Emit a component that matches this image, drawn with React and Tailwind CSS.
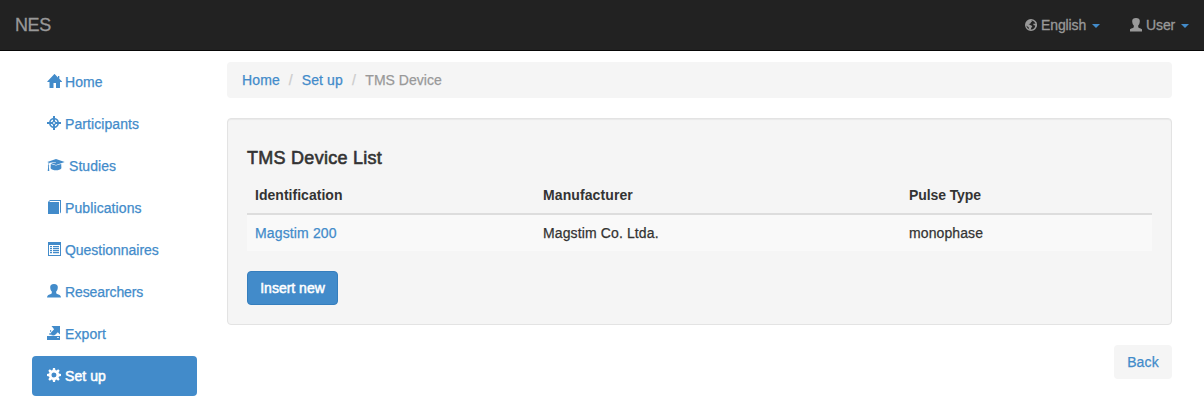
import React from "react";

function Icon({ children, className = "mr-1 w-[14px]", viewBox = "0 0 14 14" }) {
  return (
    <svg viewBox={viewBox} className={`h-[14px] shrink-0 ${className}`} fill="currentColor" aria-hidden="true">
      {children}
    </svg>
  );
}

const UserShape = () => (
  <path d="M7 0C4.300 0 3 1.400 3.200 3.500c.1 1.900.7 3.200 1.600 4.100v1.500c0 .5-.3.800-.9 1C2 10.700.2 11.100 0 13.500h14c-.2-2.400-2-2.800-3.900-3.400-.6-.2-.9-.5-.9-1V7.600c.9-.9 1.500-2.200 1.600-4.100C11 1.400 9.700 0 7 0Z" />
);

const HomeIcon = () => (
  <Icon className="mr-[3px] w-[15px]" viewBox="0 0 15 14">
    <path d="M7.500-.1 11 3.400V2h1.300v2.700L15 7.400V8h-2v6H9V9H6.500v5H2.500V8H.3v-.6Z" />
  </Icon>
);

const TargetIcon = () => (
  <Icon>
    <path
      fillRule="evenodd"
      d="M6 0h2v2.100A5 5 0 0 1 11.900 6H14v2h-2.100A5 5 0 0 1 8 11.900V14H6v-2.100A5 5 0 0 1 2.100 8H0V6h2.100A5 5 0 0 1 6 2.100ZM6 3.600A3.500 3.500 0 0 0 3.600 6H5l1-1Zm2 0V5l1 1h1.400A3.500 3.500 0 0 0 8 3.600ZM3.600 8A3.500 3.500 0 0 0 6 10.400V9L5 8Zm5.400 0-1 1v1.400A3.500 3.500 0 0 0 10.400 8ZM7 6.100A.9.9 0 1 0 7 7.900.9.900 0 0 0 7 6.100Z"
    />
  </Icon>
);

const CapIcon = () => (
  <Icon className="mr-1 w-[18px]" viewBox="0 0 18 14">
    <path d="M9 1 17.700 4 9 7 4 5.300l4.900-.8v-.5l-6.200.8c-.7.500-.9 1.200-.9 2.400.6.400.6 1 .1 1.400l.4 4.400H.7l.5-4.400c-.5-.4-.4-1 .1-1.400 0-1.100.1-1.800.6-2.500L.3 4Z" />
    <path d="m3.800 5.900 5.200 1.700 5.200-1.700.2 4.400c-1 1.400-3.100 2-5.400 2s-4.400-.6-5.400-2Z" />
  </Icon>
);

const BookIcon = () => (
  <Icon>
    <path d="M3 0h11v12.300l-1 1.200V1H3.200L2 2h10v12H1V2Z" />
  </Icon>
);

const ListIcon = () => (
  <Icon>
    <path fillRule="evenodd" d="M1 0h13v14H1ZM2 3v10h11V3Z" />
    <path d="M3 4h2v1.200H3Zm3 0h6v1.200H6ZM3 6h2v1.200H3Zm3 0h6v1.200H6ZM3 8h2v1.200H3Zm3 0h6v1.200H6Zm-3 2h2v1.200H3Zm3 0h6v1.200H6Z" />
  </Icon>
);

const ExportIcon = () => (
  <Icon>
    <path d="M4.500 0H13v8.500l-2.200-2.200L8.500 8.600 7 9.500 4.500 9.200 4 8l-.4-1 3.500-3.700Z" />
    <path d="M3 4.200h1.200v1.500H3ZM2.500 7h1.200v2H2.500Z" />
    <path fillRule="evenodd" d="M0 10h13v4H0Zm10 1.300v.6h2v-.6Z" />
  </Icon>
);

const CogIcon = () => (
  <Icon>
    <path
      fillRule="evenodd"
      d="M6 0h2l.4 2 1.100.5L11.200 1.300l1.500 1.500-1.200 1.700.5 1.100 2 .4v2l-2 .4-.5 1.100 1.200 1.700-1.500 1.500-1.700-1.200-1.100.5L8 14H6l-.4-2-1.100-.5-1.700 1.200-1.500-1.500L2.500 9.500 2 8.400 0 8V6l2-.4.5-1.100L1.300 2.800l1.500-1.500 1.700 1.200L5.600 2ZM7 4.500A2.500 2.500 0 1 0 7 9.500 2.500 2.500 0 0 0 7 4.500Z"
    />
  </Icon>
);

const GlobeIcon = () => (
  <Icon className="mr-1 w-[12px]" viewBox="1 0 12 14">
    <circle cx="7" cy="7" r="5.300" fill="none" stroke="currentColor" strokeWidth="1.400" />
    <path d="M2 5 4.500 2l3-.5-.5 1 1.400.6L7 4.300 6.200 5.700l-1.700.3.900.6 1.700.8 1.300.7-1.200 1.900-.8 2.200L5 11.200 4.600 9.200 2 7.500ZM9.300 2.500l1.700.8 1.500 2.200-1.200.6-1.400-.5-.7.6.6 1 1.600.2-.5 2.200-1 1 .2 1 2-2.200.8-3-.7-2.700Z" />
  </Icon>
);

const Caret = () => <span className="ml-[6px] translate-y-px border-x-4 border-t-4 border-x-transparent border-t-[#428bca]" />;

const navItems = [
  { label: "Home", icon: <HomeIcon />, tracking: "tracking-[0.06px]" },
  { label: "Participants", icon: <TargetIcon />, tracking: "tracking-[0.08px]" },
  { label: "Studies", icon: <CapIcon />, tracking: "tracking-[0.06px]" },
  { label: "Publications", icon: <BookIcon />, tracking: "tracking-[0.1px]" },
  { label: "Questionnaires", icon: <ListIcon />, tracking: "tracking-[-0.03px]" },
  { label: "Researchers", icon: <Icon><UserShape /></Icon>, tracking: "tracking-[-0.1px]" },
  { label: "Export", icon: <ExportIcon />, tracking: "tracking-[0.1px]" },
  { label: "Set up", icon: <CogIcon />, active: true, tracking: "tracking-[0.06px]" },
];

export default function App() {
  return (
    <div className="h-[402px] overflow-hidden bg-white font-['Liberation_Sans',Arial,sans-serif] text-[14px] leading-5 text-[#333]">
      <header className="flex h-[51px] items-center justify-between border-b border-[#080808] bg-[#222] pr-[15px] pl-[15px] text-[#999]">
        <a className="text-[18px] tracking-[-0.4px] [-webkit-text-stroke:0.3px]">NES</a>
        <div className="flex items-center [-webkit-text-stroke:0.3px]">
          <a className="flex items-center"><GlobeIcon /><span className="w-[45px] tracking-[-0.12px]">English</span><Caret /></a>
          <a className="ml-[30px] flex items-center">
            <Icon className="mr-1 w-[12px]" viewBox="1 0 12 14"><UserShape /></Icon><span className="w-[29px] tracking-[-0.1px]">User</span><Caret />
          </a>
        </div>
      </header>

      <div className="flex pt-[11px] pr-8 pl-8">
        <nav className="flex w-[165px] shrink-0 flex-col gap-0.5">
          {navItems.map(({ label, icon, active, tracking }) => (
            <a
              key={label}
              className={`flex h-10 items-center rounded-[4px] pl-[15px] ${active ? "bg-[#428bca] text-white [-webkit-text-stroke:0.5px]" : "text-[#428bca] [-webkit-text-stroke:0.25px]"}`}
            >
              <span className="flex -translate-y-px">{icon}</span>
              <span className={tracking}>{label}</span>
            </a>
          ))}
        </nav>

        <main className="ml-[30px] flex min-w-0 flex-1 flex-col">
          <ol className="flex h-9 items-center rounded-[4px] bg-[#f5f5f5] px-[15px] text-[#999] [-webkit-text-stroke:0.25px]">
            <li className="tracking-[0.12px] text-[#428bca]">Home</li>
            <li className="px-[9px] text-[#ccc]">/</li>
            <li className="tracking-[0.12px] text-[#428bca]">Set up</li>
            <li className="px-[9px] text-[#ccc]">/</li>
            <li className="pl-[0.5px] tracking-[0.02px]">TMS Device</li>
          </ol>

          <section className="mt-5 h-[207px] rounded-[4px] border border-[#e3e3e3] bg-[#f5f5f5] px-[19px] pt-[29px] shadow-[inset_0_1px_1px_rgba(0,0,0,0.05)]">
            <h4 className="text-[18px] leading-5 font-normal tracking-[0.27px] [-webkit-text-stroke:0.6px]">TMS Device List</h4>
            <table className="mt-[9px] w-full table-fixed border-collapse text-left">
              <colgroup>
                <col className="w-[288px]" />
                <col className="w-[366px]" />
                <col />
              </colgroup>
              <thead>
                <tr className="h-[37px] border-b-2 border-[#ddd]">
                  <th className="px-2 py-0 font-bold tracking-[0.03px]">Identification</th>
                  <th className="px-2 py-0 font-bold tracking-[0.1px]">Manufacturer</th>
                  <th className="px-2 py-0 font-bold tracking-[-0.1px]">Pulse Type</th>
                </tr>
              </thead>
              <tbody>
                <tr className="h-[37px] bg-[#f9f9f9] [-webkit-text-stroke:0.25px]">
                  <td className="px-2 py-0 tracking-[0.14px] text-[#428bca]">Magstim 200</td>
                  <td className="px-2 py-0 tracking-[0.12px]">Magstim Co. Ltda.</td>
                  <td className="px-2 py-0 tracking-[0.1px]">monophase</td>
                </tr>
              </tbody>
            </table>
            <button className="mt-5 h-[34px] w-[91px] rounded-[4px] border border-[#357ebd] bg-[#428bca] text-white [-webkit-text-stroke:0.5px]">
              Insert new
            </button>
          </section>

          <button className="mt-5 h-[34px] w-[58px] self-end rounded-[4px] bg-[#f5f5f5] tracking-[0.15px] text-[#428bca] [-webkit-text-stroke:0.25px]">Back</button>
        </main>
      </div>
    </div>
  );
}
